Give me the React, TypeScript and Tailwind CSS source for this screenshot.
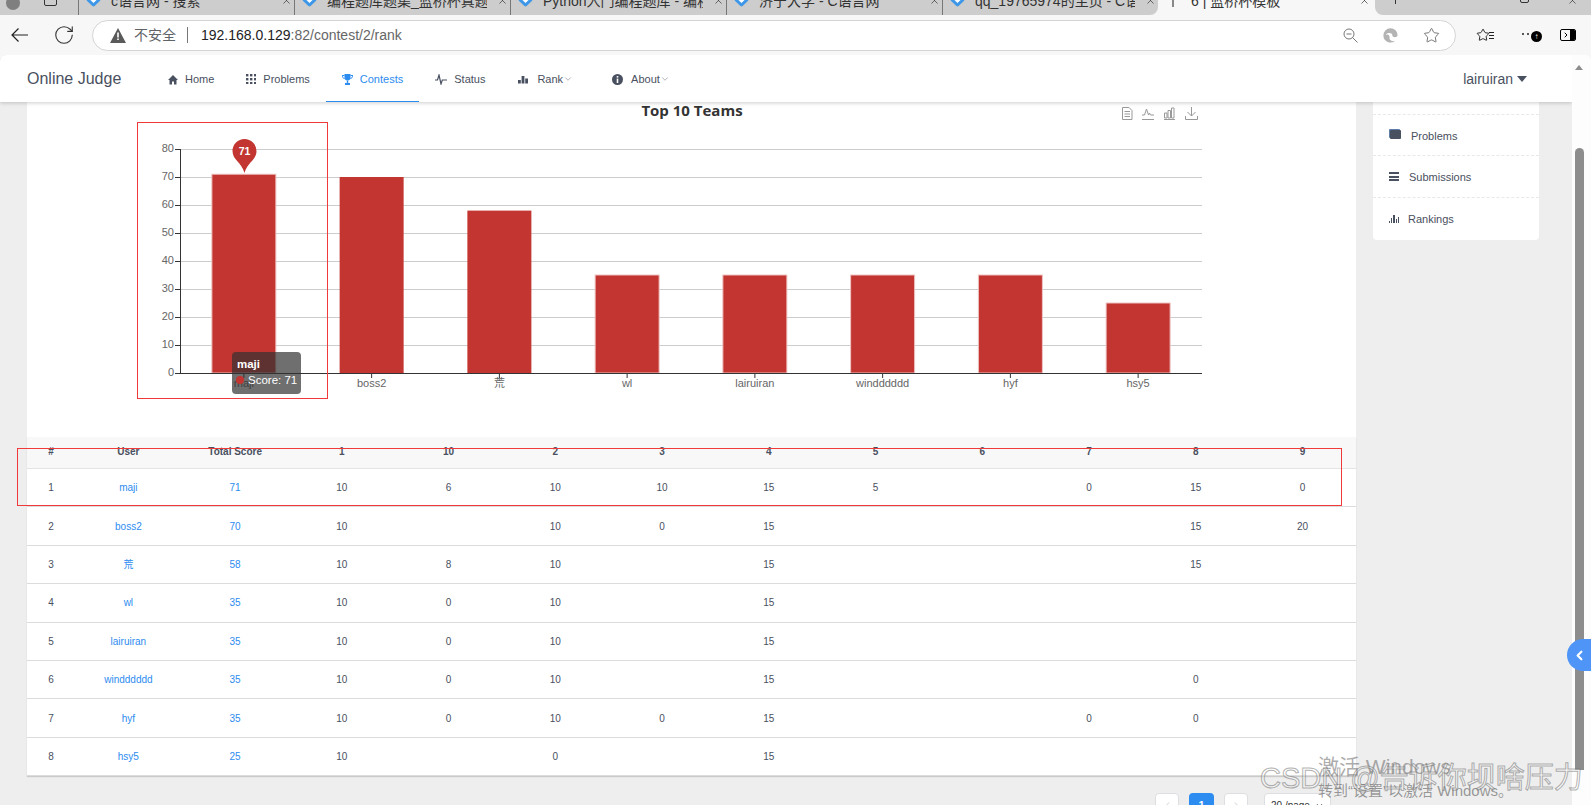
import React from 'react'
import { ChevronDown, ChevronLeft, ChevronRight, RotateCw, Star, X } from 'lucide-react'

const columns = ['#', 'User', 'Total Score', '1', '10', '2', '3', '4', '5', '6', '7', '8', '9']

const rows = [
  ['1', 'maji', '71', '10', '6', '10', '10', '15', '5', '', '0', '15', '0'],
  ['2', 'boss2', '70', '10', '', '10', '0', '15', '', '', '', '15', '20'],
  ['3', '荒', '58', '10', '8', '10', '', '15', '', '', '', '15', ''],
  ['4', 'wl', '35', '10', '0', '10', '', '15', '', '', '', '', ''],
  ['5', 'lairuiran', '35', '10', '0', '10', '', '15', '', '', '', '', ''],
  ['6', 'windddddd', '35', '10', '0', '10', '', '15', '', '', '', '0', ''],
  ['7', 'hyf', '35', '10', '0', '10', '0', '15', '', '', '0', '0', ''],
  ['8', 'hsy5', '25', '10', '', '0', '', '15', '', '', '', '', ''],
]

const tabs = [
  'c语言网 - 搜索',
  '编程题库题集_蓝桥杯真题_在线',
  'Python入门编程题库 - 编程题',
  '济宁大学 - C语言网',
  'qq_19765974的主页 - C语言',
]

const HomeIcon = () => (
  <svg width="10" height="11" viewBox="0 0 10 11" fill="currentColor">
    <path d="M5 1l5 5H8.500v4.500H6V7.500H4v3H1.500V6H0z" />
  </svg>
)
const KeypadIcon = () => (
  <svg width="10" height="10" viewBox="0 0 10 10" fill="currentColor">
    {[0, 4, 8].map((x) => [0, 4, 8].map((y) => <rect key={`${x}-${y}`} x={x} y={y} width="2.400" height="2.400" />))}
  </svg>
)
const TrophyIcon = () => (
  <svg width="11" height="11" viewBox="0 0 11 11" fill="currentColor">
    <path d="M2.500 0h6v3.500a3 3 0 0 1-6 0z" />
    <path d="M0 1h2.500v1H1c0 1 .5 2 1.800 2.500l.3.800C1 5 0 3.500 0 1zM11 1H8.500v1H10c0 1-.5 2-1.800 2.500l-.3.800C10 5 11 3.500 11 1z" />
    <path d="M4.800 6.500h1.400v2.500H8V11H3V9h1.800z" />
  </svg>
)
const PulseIcon = () => (
  <svg width="12" height="11" viewBox="0 0 12 11" fill="none" stroke="currentColor" strokeWidth="1.200">
    <path d="M0 6h2.500l1.500-5 2 9 1.300-4H12" />
  </svg>
)
const PodiumIcon = () => (
  <svg width="10" height="10" viewBox="0 0 10 10" fill="currentColor">
    <rect x="0" y="6" width="2.800" height="3.500" />
    <rect x="3.600" y="2" width="2.800" height="7.500" />
    <rect x="7.200" y="4.500" width="2.800" height="5" />
  </svg>
)
const InfoIcon = () => (
  <svg width="11" height="11" viewBox="0 0 11 11">
    <circle cx="5.500" cy="5.500" r="5.500" fill="currentColor" />
    <rect x="4.700" y="2" width="1.600" height="1.600" fill="#fff" />
    <rect x="4.700" y="4.600" width="1.600" height="4.400" fill="#fff" />
  </svg>
)

const nav = [
  { label: 'Home', icon: HomeIcon, cls: 'pl-[16px] pr-[16px] gap-[7px]' },
  { label: 'Problems', icon: KeypadIcon, cls: 'pl-[16px] pr-[16px] gap-[7px]' },
  { label: 'Contests', icon: TrophyIcon, cls: 'pl-[16px] pr-[16px] gap-[7px]', active: true },
  { label: 'Status', icon: PulseIcon, cls: 'pl-[16px] pr-[16px] gap-[7px]' },
  { label: 'Rank', icon: PodiumIcon, cls: 'pl-[17px] pr-[15px] gap-[9px]', caret: true },
  { label: 'About', icon: InfoIcon, cls: 'pl-[24px] pr-[16px] gap-[8px]', caret: true },
]

const bars = [
  { name: 'maji', score: 71 },
  { name: 'boss2', score: 70 },
  { name: '荒', score: 58 },
  { name: 'wl', score: 35 },
  { name: 'lairuiran', score: 35 },
  { name: 'windddddd', score: 35 },
  { name: 'hyf', score: 35 },
  { name: 'hsy5', score: 25 },
]

const axisFont = "'Liberation Sans', 'Noto Sans CJK SC', sans-serif"

// chart svg origin sits at page (27,102)
const Chart = () => {
  const left = 153
  const right = 1175
  const base = 271
  const step = 28
  const band = (right - left) / 8
  return (
    <svg width="1329" height="335" className="block">
      <text x="665" y="14" textAnchor="middle" fontSize="15" fontWeight="700" fill="#333" fontFamily="'Open Sans', sans-serif">Top 10 Teams</text>
      {/* toolbox */}
      <g fill="none" stroke="#999" strokeWidth="1">
        <path d="M1095.500 5.500h6.500l3 3v9h-9.500zM1097.500 9.500h5.500M1097.500 12h5.500M1097.500 14.500h5.500" />
        <path d="M1115 13h2.500l2-6 2 6 1-2 1 2h3.500M1115 17.500h12" />
        <path d="M1137.500 16v-5h2.500v5zM1141 16v-7.500h2.500v7.500zM1144.500 16v-10h2.500v10zM1137 17.500h11" />
        <path d="M1164.500 5v9M1160.500 10l4 4 4-4M1158.500 14v3.500h12v-3.500" />
      </g>
      {[0, 10, 20, 30, 40, 50, 60, 70, 80].map((v) => {
        const y = base - (v / 10) * step
        return (
          <g key={v}>
            {v > 0 && <line x1={left} x2={right} y1={y + 0.5} y2={y + 0.5} stroke="#ccc" />}
            <line x1={left - 5} x2={left} y1={y + 0.5} y2={y + 0.5} stroke="#333" />
            <text x={left - 6} y={y + 3} textAnchor="end" fontSize="11" fill="#666" fontFamily={axisFont}>{v}</text>
          </g>
        )
      })}
      {bars.map((b, i) => {
        const x = left + band * i + (band - 64) / 2
        const h = (b.score / 10) * step
        const cx = left + band * i + band / 2
        return (
          <g key={b.name}>
            <rect x={x} y={base - h} width="64" height={h} fill="#c23531" stroke={b.score === 70 || b.score === 58 ? 'none' : '#eec4c2'} />
            <line x1={cx} x2={cx} y1={base} y2={base + 5} stroke="#333" />
            <text x={cx} y={base + 14} textAnchor="middle" fontSize="11" fill="#666" fontFamily={axisFont}>{b.name}</text>
          </g>
        )
      })}
      <line x1={left + 0.5} x2={left + 0.5} y1={base - 224} y2={base + 0.5} stroke="#333" />
      <line x1={left} x2={right} y1={base + 0.5} y2={base + 0.5} stroke="#333" />
      {/* max pin */}
      <path d="M217.500 71 C214.500 60 205.500 58 205.500 49 A12 12 0 1 1 229.500 49 C229.500 58 220.500 60 217.500 71Z" fill="#c23531" />
      <text x="217.500" y="53" textAnchor="middle" fontSize="10.500" fontWeight="700" fill="#fff" fontFamily={axisFont}>71</text>
    </svg>
  )
}

const EdgeIcon = () => (
  <svg width="17" height="17" viewBox="0 0 18 18">
    <path d="M1.500 9a7.500 7.500 0 0 1 15-.5c0 3-5.500 3-5.500 .5 0-3-5.500-3.500-7-.5 2-1.500 4.500 0 4 3-.5 2.500 2.500 4.500 6 3a7.500 7.500 0 0 1-12.500-5.500z" fill="#b4b4b4" />
  </svg>
)

const ZoomOutIcon = () => (
  <svg width="15" height="15" viewBox="0 0 15 15" fill="none" stroke="#777" strokeWidth="1">
    <circle cx="6" cy="6" r="5" />
    <path d="M3.500 6h5M9.500 9.500L14.500 14.500" />
  </svg>
)

const App = () => {
  return (
    <div className="relative h-[805px] w-[1591px] overflow-hidden bg-[#f7f7f7] font-['Liberation_Sans','Noto_Sans_CJK_SC',sans-serif] text-[#495060]">
      {/* browser tab strip */}
      <div className="flex h-[15px] overflow-hidden text-[14px] leading-[18px] text-[#333]">
        <div className="flex w-[1158px] shrink-0 rounded-br-[8px] bg-[#cdcdcd]">
          <div className="flex w-[78px] shrink-0 items-start gap-[24px] pl-[6px]">
            <div className="-mt-[4px] size-[14px] rounded-full bg-[#7f7f7f]" />
            <div className="-mt-[7px] size-[13px] rounded-[2px] border border-[#333]" />
          </div>
          {tabs.map((t) => (
            <div key={t} className="flex h-[15px] w-[216px] shrink-0 items-start border-l border-[#777] pl-[9px]">
              <div className="-mt-[6px] size-[11px] shrink-0 rotate-45 rounded-[2px] border-[3px] border-[#3f97e8] bg-white" />
              <span className="-mt-[8px] ml-[12px] w-[160px] shrink-0 overflow-hidden whitespace-nowrap">{t}</span>
              <X className="-mt-[5px] ml-[10px] size-[11px] shrink-0" strokeWidth={1.5} />
            </div>
          ))}
        </div>
        <div className="flex w-[217px] shrink-0 items-start pl-[14px]">
          <div className="-mt-[2px] h-[9px] w-[2px] bg-[#888]" />
          <span className="-mt-[8px] ml-[17px] w-[160px] overflow-hidden whitespace-nowrap">6 | 蓝桥杯模板</span>
          <X className="-mt-[5px] ml-[8px] size-[11px] shrink-0" strokeWidth={1.5} />
        </div>
        <div className="flex flex-1 items-start rounded-bl-[8px] bg-[#cdcdcd]">
          <div className="ml-[20px] h-[4px] w-px bg-[#333]" />
          <div className="-mt-[6px] ml-[124px] size-[9px] rounded-[2px] border border-[#333]" />
          <X className="-mt-[5px] ml-[38px] size-[11px]" strokeWidth={1.5} />
        </div>
      </div>

      {/* address bar */}
      <div className="flex h-[40px] items-center bg-[#f7f7f7] pl-[11px]">
        <svg width="17" height="14" viewBox="0 0 17 14" fill="none" stroke="#222" strokeWidth="1.200">
          <path d="M17 7H1M7.500 .5L1 7l6.500 6.500" />
        </svg>
        <RotateCw className="ml-[25px] size-[22px] text-[#333]" strokeWidth={1.2} />
        <div className="ml-[17px] flex h-[31px] w-[1364px] items-center rounded-full border border-[#d4d4d4] bg-white pl-[17px] pr-[15px]">
          <svg width="16" height="15" viewBox="0 0 16 15">
            <path d="M8 0l8 15H0z" fill="#5a5a5a" />
            <path d="M7.200 4.500h1.600v5H7.200zM7.200 10.500h1.600v1.600H7.200z" fill="#fff" />
          </svg>
          <span className="ml-[8px] text-[14px] text-[#5f6368]">不安全</span>
          <div className="ml-[11px] h-[16px] w-px bg-[#777]" />
          <span className="ml-[13px] text-[14px] text-[#222]">192.168.0.129<span className="text-[#666]">:82/contest/2/rank</span></span>
          <div className="ml-auto flex items-center gap-[24px]">
            <ZoomOutIcon />
            <EdgeIcon />
            <Star className="size-[17px] text-[#666]" strokeWidth={1.25} />
          </div>
        </div>
        <div className="relative ml-[20px] flex h-[20px] items-center">
          <Star className="size-[14px] text-[#111]" strokeWidth={1.5} />
          <div className="ml-[-1px] flex flex-col gap-[2px]">
            <div className="h-px w-[5px] bg-[#222]" />
            <div className="h-px w-[5px] bg-[#222]" />
            <div className="h-px w-[5px] bg-[#222]" />
          </div>
          <div className="-mt-[2px] ml-[28px] flex gap-[3px]">
            <span className="size-[2px] rounded-full bg-[#222]" />
            <span className="size-[2px] rounded-full bg-[#222]" />
            <span className="size-[2px] rounded-full bg-[#222]" />
          </div>
          <span className="absolute left-[55px] top-[6px] flex size-[11px] items-center justify-center rounded-full bg-black text-[8px] font-bold leading-none text-white">↑</span>
          <div className="ml-[26px] flex h-[12px] w-[16px] overflow-hidden rounded-[2px] border border-black">
            <div className="flex w-[9px] items-center justify-center">
              <ChevronRight className="size-[8px] text-black" strokeWidth={3} />
            </div>
            <div className="flex-1 bg-black" />
          </div>
        </div>
      </div>

      {/* page */}
      <div className="relative z-0 flex h-[750px] overflow-hidden rounded-t-[6px]">
        <div className="flex w-[1572px] flex-col overflow-hidden bg-[#eeeeee]">
          <header className="z-10 flex h-[47px] shrink-0 items-stretch bg-white shadow-[0_1px_4px_rgba(0,0,0,0.2)]">
            <span className="ml-[27px] mt-[15px] w-[125px] text-[16px] leading-[18px] text-[#495060]">Online Judge</span>
            <nav className="flex text-[11px]">
              {nav.map(({ label, icon: Icon, cls, active, caret }) => (
                <div key={label} className={`${cls} flex items-center border-b pt-[2px] ${active ? 'border-[#2d8cf0] text-[#2d8cf0]' : 'border-transparent text-[#495060]'}`}>
                  <Icon />
                  <span className="flex items-center whitespace-nowrap">
                    {label}
                    {caret && <ChevronDown className="size-[10px] text-[#80848f]" strokeWidth={1.5} />}
                  </span>
                </div>
              ))}
            </nav>
            <div className="ml-auto mr-[45px] mt-[15px] flex h-[18px] items-center gap-[4px] text-[14px]">
              lairuiran
              <span className="h-0 w-0 border-x-[5px] border-t-[6px] border-x-transparent border-t-[#495060]" />
            </div>
          </header>

          <div className="flex items-start gap-[17px] pl-[27px]">
            <main className="w-[1329px] shrink-0">
              <section className="h-[335px] bg-white">
                <Chart />
              </section>
              <section className="bg-white text-[10px] shadow-[0_1px_1px_rgba(0,0,0,0.15)]">
                <div className="grid h-[32px] grid-cols-[48px_repeat(12,1fr)] items-center border-b border-[#e4e4e4] bg-[#f8f8f9] font-bold text-[#495060]">
                  {columns.map((c, i) => (
                    <div key={i} className="-mt-[2px] text-center">{c}</div>
                  ))}
                </div>
                {rows.map((r) => (
                  <div key={r[0]} className="grid h-[38.400px] grid-cols-[48px_repeat(12,1fr)] items-center border-b border-[#dcdcdc] text-[#495060]">
                    {r.map((cell, i) => (
                      <div key={i} className={`text-center ${i === 1 || i === 2 ? 'text-[#2d8cf0]' : ''}`}>{cell}</div>
                    ))}
                  </div>
                ))}
              </section>
              <div className="mt-[17px] flex items-start pl-[1128px] text-[11px]">
                <div className="flex h-[24px] w-[24px] items-center justify-center rounded-[4px] border border-[#dddee1] bg-white">
                  <ChevronLeft className="size-[11px] text-[#ccc]" />
                </div>
                <div className="ml-[10px] flex h-[24px] w-[25px] items-center justify-center rounded-[4px] bg-[#2d8cf0] font-bold text-white">1</div>
                <div className="ml-[10px] flex h-[24px] w-[24px] items-center justify-center rounded-[4px] border border-[#dddee1] bg-white">
                  <ChevronRight className="size-[11px] text-[#ccc]" />
                </div>
                <div className="ml-[16px] flex h-[24px] w-[67px] items-center justify-between whitespace-nowrap rounded-[4px] border border-[#dddee1] bg-white px-[6px] text-[10px] text-[#333]">
                  20 /page
                  <ChevronDown className="size-[9px] shrink-0" />
                </div>
              </div>
            </main>

            <aside className="w-[166px] shrink-0 rounded-b-[4px] bg-white text-[11px] text-[#495060]">
              <div className="h-[13px] border-b border-dashed border-[#e8e8e8]" />
              <div className="flex h-[41px] items-center border-b border-dashed border-[#e8e8e8] pl-[16px]">
                <span className="ml-px mt-[-2px] h-[9px] w-[11px] rounded-[1px] bg-[#495060] shadow-[-1px_-1px_0_#5b7fa8]" />
                <span className="ml-[10px] mt-[2px]">Problems</span>
              </div>
              <div className="flex h-[42px] items-center border-b border-dashed border-[#e8e8e8] pl-[16px]">
                <span className="flex w-[10px] flex-col gap-[1.500px]">
                  <span className="h-[2px] bg-[#495060]" />
                  <span className="h-[2px] bg-[#495060]" />
                  <span className="h-[2px] bg-[#495060]" />
                </span>
                <span className="ml-[10px] mt-[2px]">Submissions</span>
              </div>
              <div className="flex h-[42px] items-center pl-[16px]">
                <span className="flex h-[8px] w-[10px] items-end gap-px">
                  <span className="h-[2px] w-[1px] bg-[#495060]" />
                  <span className="h-[5px] w-[1px] bg-[#495060]" />
                  <span className="h-[8px] w-[1.500px] bg-[#495060]" />
                  <span className="h-[4px] w-[1px] bg-[#495060]" />
                  <span className="h-[6px] w-[1.500px] bg-[#495060]" />
                </span>
                <span className="ml-[9px]">Rankings</span>
              </div>
            </aside>
          </div>
        </div>

        {/* page scrollbar */}
        <div className="flex w-[19px] flex-col items-start bg-[#fdfdfd]">
          <span className="ml-[3px] mt-[10px] h-0 w-0 border-x-[4px] border-b-[5px] border-x-transparent border-b-[#8d8d8d]" />
          <div className="ml-[3px] mt-[78px] h-[622px] w-[9px] rounded-t-full bg-[#8d8d8d]" />
        </div>
      </div>

      {/* red marks drawn on the screenshot */}
      <div className="pointer-events-none absolute left-[137px] top-[122px] h-[277px] w-[191px] border border-[#f03a3a]" />
      <div className="pointer-events-none absolute left-[17px] top-[448px] h-[58px] w-[1325px] border border-[#f03a3a]" />

      {/* chart tooltip */}
      <div className="absolute left-[232px] top-[352px] h-[42px] w-[69px] rounded-[4px] bg-[rgba(50,50,50,0.7)] pl-[5px] pt-[4px] text-[11.500px] leading-[16px] text-white">
        <div className="font-bold">maji</div>
        <div className="-ml-px flex items-center gap-[4px] whitespace-nowrap">
          <span className="size-[8px] shrink-0 rounded-full bg-[#c23531]" />
          Score: 71
        </div>
      </div>

      {/* floating side handle */}
      <div className="absolute left-[1567px] top-[639px] flex h-[32px] w-[24px] items-center justify-center rounded-l-full bg-[#4e95f7]">
        <ChevronLeft className="size-[15px] text-white" strokeWidth={3.5} />
      </div>

      {/* watermarks */}
      <div className="pointer-events-none absolute left-[1318px] top-[756px] whitespace-nowrap text-[21px] leading-[22px] text-[rgba(90,90,90,0.5)]">激活 Windows</div>
      <div className="pointer-events-none absolute left-[1318px] top-[783px] whitespace-nowrap text-[15px] leading-[16px] text-[rgba(90,90,90,0.6)]">转到“设置”以激活 Windows。</div>
      <div className="pointer-events-none absolute left-[1260px] top-[761px] whitespace-nowrap text-[29px] leading-[34px] text-[rgba(255,255,255,0.35)] [-webkit-text-stroke:1px_rgba(110,110,110,0.55)]">CSDN @告诉你坝啥压力</div>
    </div>
  )
}

export default App
